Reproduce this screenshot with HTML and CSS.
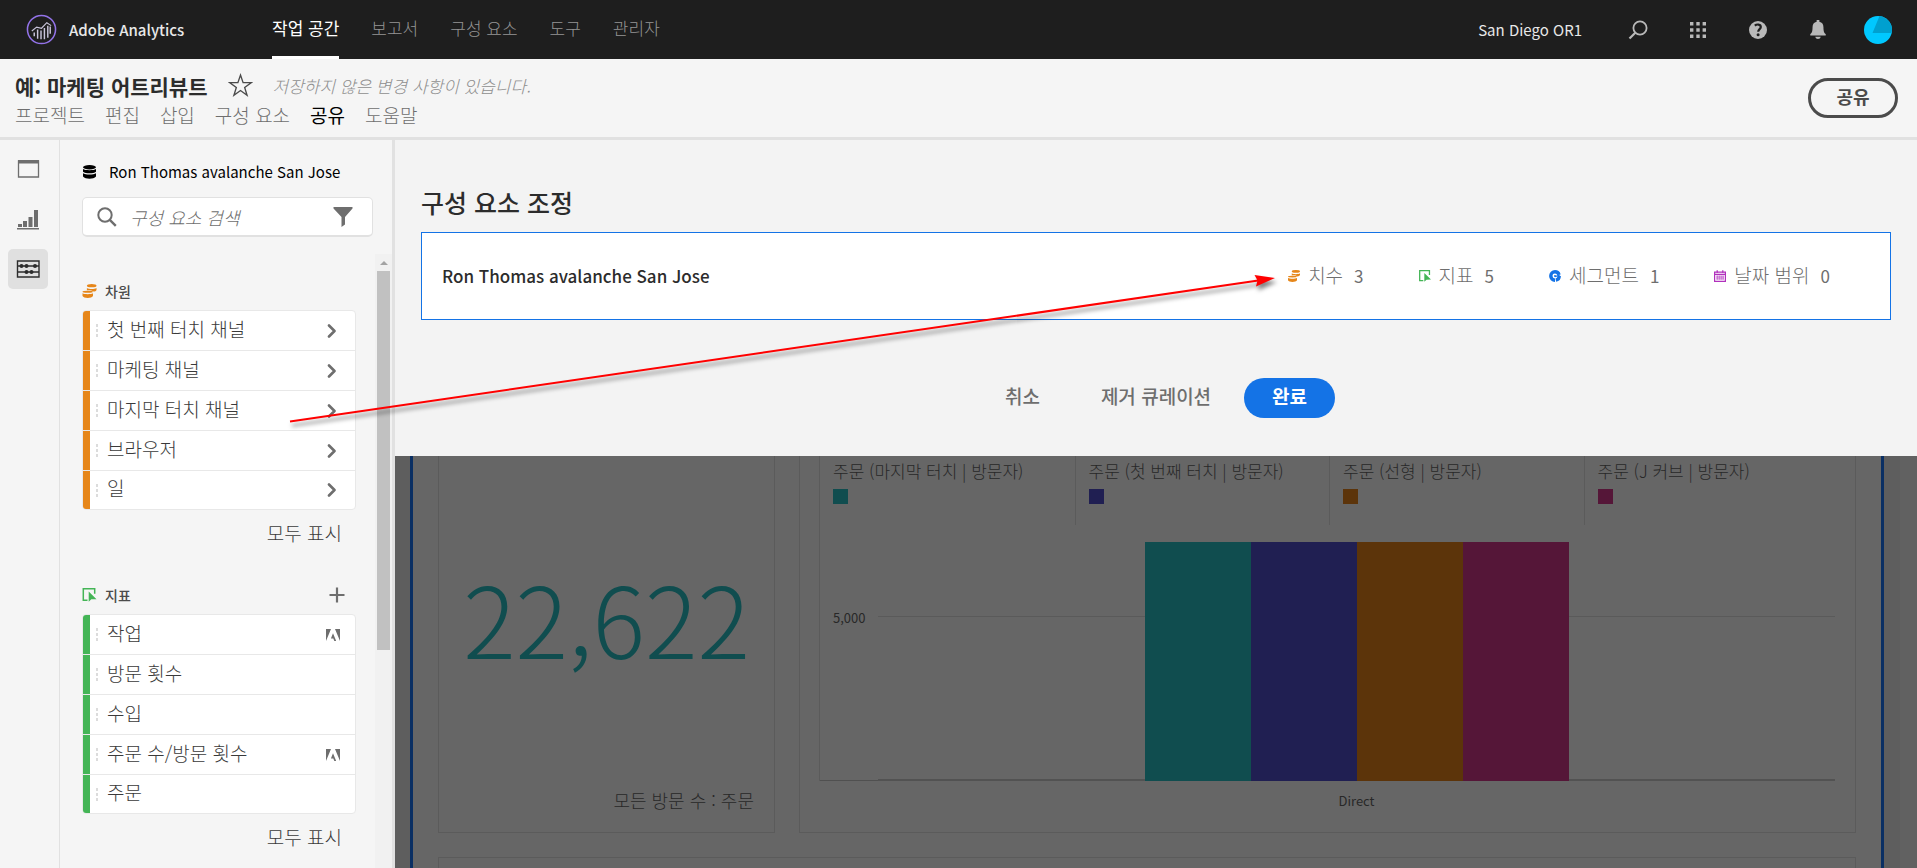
FILE: index.html
```html
<!DOCTYPE html>
<html lang="ko">
<head>
<meta charset="utf-8">
<title>Adobe Analytics</title>
<link rel="stylesheet" href="styles.css">
</head>
<body>
<svg class="sprite" aria-hidden="true">
  <symbol id="i-dimension" viewBox="0 0 14 14">
    <ellipse cx="9.2" cy="1.7" rx="4.800" ry="1.600"/>
    <path d="M4.400 3.900c1 .7 3 1 4.800 1s3.800-.3 4.800-1v2c-.5 1.100-1.600 1.500-3 1.700C10 6.500 7 6 4.400 6.200z"/>
    <ellipse cx="5.200" cy="7.700" rx="5.200" ry="1"/>
    <path d="M0 9.300c1 .6 3 .9 5.200.9s4.200-.3 5.300-.9V12c-.6 1.300-2.900 2-5.300 2S.6 13.300 0 12z"/>
  </symbol>
  <symbol id="i-metric" viewBox="0 0 14 14">
    <path d="M5 12.300H.8V.8h11.400v5" fill="none" stroke="currentColor" stroke-width="1.500"/>
    <path d="M6.200 3.500v10.200l2.600-2.400 5.200-.1z"/>
  </symbol>
  <symbol id="i-segment" viewBox="0 0 14 14">
    <circle cx="7" cy="7" r="4.900" fill="none" stroke="currentColor" stroke-width="4" stroke-dasharray="6.500 1 21 2.280"/>
    <path d="M7 7 13 5v1.300L7 8.500z"/>
    <circle cx="7" cy="7" r="1.200"/>
  </symbol>
  <symbol id="i-calendar" viewBox="0 0 14 14">
    <path d="M.7 2.500h12.600v10.800H.7zM.7 5h12.600" fill="none" stroke="currentColor" stroke-width="1.400"/>
    <path d="M3 .3h1.500v3H3zM9.500.3H11v3H9.500zM3 6.500h1.300v5H3zM5.300 6.500h1.300v5H5.300zM7.600 6.500h1.300v5H7.600zM9.900 6.500h1.300v5H9.900z"/>
  </symbol>
  <symbol id="i-chevron" viewBox="0 0 10 14">
    <path d="M2 1.500 7.500 7 2 12.500" fill="none" stroke="currentColor" stroke-width="2.600" stroke-linecap="round" stroke-linejoin="round"/>
  </symbol>
  <symbol id="i-adobe" viewBox="0 0 14 12">
    <path d="M0 0h5L0 12zM9 0h5v12zM7 4.200 10.200 12H8.300l-1-2.500H4.900z"/>
  </symbol>
</svg>
<div class="app">
  <header class="topbar">
    <a class="brand" href="#">
      <svg class="brand-logo" viewBox="0 0 32 32"><circle cx="16" cy="16" r="14.500" fill="none" stroke="#9373e8" stroke-width="1.600"/><g fill="none" stroke="#c9c4da" stroke-width="1.500"><path d="M8.500 19v4M12 16v9.500M15.500 17v9M19 14.500V26M22.500 12v12.500M25 13v7.500"/><path d="m6 17.500 5-4 5 1.200 5.500-5.700 4.500 3" stroke-width="1.200"/></g></svg>
      <span>Adobe Analytics</span>
    </a>
    <nav class="topnav">
      <a class="active" href="#">작업 공간</a>
      <a href="#">보고서</a>
      <a href="#">구성 요소</a>
      <a href="#">도구</a>
      <a href="#">관리자</a>
    </nav>
    <span class="org">San Diego OR1</span>
    <div class="top-actions">
      <button type="button" aria-label="검색"><svg viewBox="0 0 20 20"><circle cx="12" cy="8" r="6.600" fill="none" stroke="currentColor" stroke-width="1.800"/><path d="m7.300 12.700-5.800 5.800" stroke="currentColor" stroke-width="2.200"/></svg></button>
      <button type="button" aria-label="앱"><svg viewBox="0 0 20 20"><path d="M2 2h3.400v3.400H2zM8.300 2h3.400v3.400H8.300zM14.600 2H18v3.400h-3.400zM2 8.300h3.400v3.400H2zM8.300 8.300h3.400v3.400H8.300zM14.600 8.300H18v3.400h-3.400zM2 14.600h3.400V18H2zM8.300 14.600h3.400V18H8.300zM14.600 14.600H18V18h-3.400z"/></svg></button>
      <button type="button" aria-label="도움말"><svg viewBox="0 0 20 20"><circle cx="10" cy="10" r="9"/><path d="M6.800 5.600C8.700 4 12.800 4 12.800 7c0 2-2.600 2.300-2.600 4.700" fill="none" stroke="#1e1e1e" stroke-width="2.200"/><circle cx="10.100" cy="14.800" r="1.500" fill="#1e1e1e"/></svg></button>
      <button type="button" aria-label="알림"><svg viewBox="0 0 20 22"><path d="M8.500 0h3v2c3 .6 4.500 2.800 4.500 6 0 5 1 6.500 2.500 7.500V17h-17v-1.500C3 14.500 4 13 4 8c0-3.200 1.500-5.400 4.500-6zM7 18.500h6c-.4 1.600-1.600 2.500-3 2.500s-2.600-.9-3-2.500z"/></svg></button>
      <button class="avatar" type="button" aria-label="계정"><svg viewBox="0 0 28 28"><circle cx="14" cy="14" r="14" fill="#00c8ff"/><path d="M15.500.1 8.500 17H27.700A14 14 0 0 0 15.500.1z" fill="#00a0cf"/></svg></button>
    </div>
  </header>

  <section class="project-bar">
    <div class="project-info">
      <div class="title-row">
        <h1>예: 마케팅 어트리뷰트</h1>
        <button class="star" type="button" aria-label="즐겨찾기"><svg viewBox="0 0 24 24"><path d="m12 2 2.500 7.300h7.700L16 13.900l2.300 7.400-6.300-4.500-6.300 4.500L8 13.900 1.800 9.300h7.700z" fill="none" stroke="#4b4b4b" stroke-width="1.300"/></svg></button>
        <em>저장하지 않은 변경 사항이 있습니다.</em>
      </div>
      <nav class="menu">
        <a href="#">프로젝트</a>
        <a href="#">편집</a>
        <a href="#">삽입</a>
        <a href="#">구성 요소</a>
        <a class="active" href="#">공유</a>
        <a href="#">도움말</a>
      </nav>
    </div>
    <button class="share" type="button">공유</button>
  </section>

  <div class="body">
    <nav class="rail">
      <button type="button" aria-label="패널"><svg viewBox="0 0 24 24"><path d="M2.500 4h20v16h-20z" fill="none" stroke="currentColor" stroke-width="1.300"/><path d="M2 3h21v3.500H2z"/></svg></button>
      <button type="button" aria-label="시각화"><svg viewBox="0 0 24 24"><path d="M1 21h22v1.500H1zM2 17h4v3H2zM7 14h4v6H7zM12.500 10h4v10h-4zM18 3h4v17h-4z"/></svg></button>
      <button class="selected" type="button" aria-label="구성 요소"><svg viewBox="0 0 24 24"><path d="M1.500 4h21.500v16H1.500zM1.500 9h21.500M1.500 15h21.500" fill="none" stroke="currentColor" stroke-width="1.400"/><circle cx="5.500" cy="9" r="2"/><circle cx="10.500" cy="9" r="2"/><circle cx="19" cy="9" r="2"/><circle cx="10.500" cy="15" r="2"/><circle cx="15.500" cy="15" r="2"/></svg></button>
    </nav>

    <aside class="sidebar">
      <div class="suite">
        <svg viewBox="0 0 14 14"><ellipse cx="7" cy="2.300" rx="6.500" ry="2.200"/><path d="M.5 4c2.500 1.600 10.500 1.600 13 0v2.700c-2.500 2-10.500 2-13 0zM.5 8.300c2.500 1.700 10.500 1.700 13 0v3.200c-2.500 3-10.500 3-13 0z"/></svg>
        <span>Ron Thomas avalanche San Jose</span>
      </div>
      <div class="search">
        <svg viewBox="0 0 20 20"><circle cx="8" cy="8" r="6.700" fill="none" stroke="currentColor" stroke-width="2"/><path d="m12.800 12.800 6 6" stroke="currentColor" stroke-width="2.400"/></svg>
        <input type="text" placeholder="구성 요소 검색" aria-label="구성 요소 검색">
        <button type="button" aria-label="필터"><svg viewBox="0 0 20 20"><path d="M.5 0h19v1.500L12 10v7.500L8.500 20V10L.5 1.500z"/></svg></button>
      </div>
      <div class="scroll-area">
        <div class="components">
          <section class="group orange">
            <h2><svg><use href="#i-dimension"/></svg><span>차원</span></h2>
            <ul>
              <li><i class="grip"></i><span>첫 번째 터치 채널</span><svg class="chev"><use href="#i-chevron"/></svg></li>
              <li><i class="grip"></i><span>마케팅 채널</span><svg class="chev"><use href="#i-chevron"/></svg></li>
              <li><i class="grip"></i><span>마지막 터치 채널</span><svg class="chev"><use href="#i-chevron"/></svg></li>
              <li><i class="grip"></i><span>브라우저</span><svg class="chev"><use href="#i-chevron"/></svg></li>
              <li><i class="grip"></i><span>일</span><svg class="chev"><use href="#i-chevron"/></svg></li>
            </ul>
            <a class="show-all" href="#">모두 표시</a>
          </section>
          <section class="group green">
            <h2><svg><use href="#i-metric"/></svg><span>지표</span><button type="button" aria-label="지표 추가"><svg viewBox="0 0 16 16"><path d="M8 .5v15M.5 8h15" stroke="currentColor" stroke-width="2.200"/></svg></button></h2>
            <ul>
              <li><i class="grip"></i><span>작업</span><svg class="adobe"><use href="#i-adobe"/></svg></li>
              <li><i class="grip"></i><span>방문 횟수</span></li>
              <li><i class="grip"></i><span>수입</span></li>
              <li><i class="grip"></i><span>주문 수/방문 횟수</span><svg class="adobe"><use href="#i-adobe"/></svg></li>
              <li><i class="grip"></i><span>주문</span></li>
            </ul>
            <a class="show-all" href="#">모두 표시</a>
          </section>
        </div>
        <div class="scrollbar"><i class="arrow"></i><i class="thumb"></i></div>
      </div>
    </aside>

    <main class="workspace">
      <section class="curate">
        <h2>구성 요소 조정</h2>
        <div class="drop-card">
          <strong>Ron Thomas avalanche San Jose</strong>
          <ul class="counts">
            <li><svg class="c-orange"><use href="#i-dimension"/></svg><span>치수</span><b>3</b></li>
            <li><svg class="c-green"><use href="#i-metric"/></svg><span>지표</span><b>5</b></li>
            <li><svg class="c-blue"><use href="#i-segment"/></svg><span>세그먼트</span><b>1</b></li>
            <li><svg class="c-purple"><use href="#i-calendar"/></svg><span>날짜 범위</span><b>0</b></li>
          </ul>
        </div>
        <div class="actions">
          <button type="button">취소</button>
          <button type="button">제거 큐레이션</button>
          <button class="primary" type="button">완료</button>
        </div>
      </section>

      <div class="canvas">
        <div class="panel">
          <div class="viz-row">
            <article class="viz summary">
              <div class="big-number">22,622</div>
              <div class="caption">모든 방문 수 : 주문</div>
            </article>
            <article class="viz chart">
              <ul class="legend">
                <li><span>주문 (마지막 터치 | 방문자)</span><i class="teal"></i></li>
                <li><span>주문 (첫 번째 터치 | 방문자)</span><i class="indigo"></i></li>
                <li><span>주문 (선형 | 방문자)</span><i class="amber"></i></li>
                <li><span>주문 (J 커브 | 방문자)</span><i class="magenta"></i></li>
              </ul>
              <div class="plot-row">
                <div class="y-axis">5,000</div>
                <div class="plot">
                  <div class="gridline"></div>
                  <div class="bars"><i class="teal"></i><i class="indigo"></i><i class="amber"></i><i class="magenta"></i></div>
                </div>
              </div>
              <div class="x-axis">Direct</div>
            </article>
          </div>
          <div class="viz next"></div>
        </div>
        <div class="canvas-scroll"></div>
      </div>
    </main>
  </div>
</div>
<svg class="callout" width="1300" height="450" viewBox="0 0 1300 450" aria-hidden="true">
  <path d="M290 421.500 1260 280.300" fill="none" stroke="#f00" stroke-width="2"/>
  <path d="M1254.500 275 1275 278 1256 286.500 1257.500 280.500z" fill="#f00"/>
</svg>
</body>
</html>
```
FILE: styles.css
```css
* { box-sizing: border-box; }
body, h1, h2, ul { margin: 0; padding: 0; }
body {
  font-family: "Noto Sans CJK KR", "Noto Sans", sans-serif;
  font-size: 19px;
  line-height: 24px;
  color: #4b4b4b;
}
ul { list-style: none; }
a { color: inherit; text-decoration: none; }
button { font: inherit; color: inherit; background: none; border: 0; padding: 0; }
svg { display: block; fill: currentColor; flex: none; }
.sprite { position: absolute; width: 0; height: 0; }

.app { display: flex; flex-direction: column; height: 100vh; overflow: hidden; }

/* Top bar */
.topbar { display: flex; align-items: center; flex: none; height: 59px; padding: 0 25px 0 26px; background: #1e1e1e; color: #e8e8e8; }
.brand { display: flex; align-items: center; gap: 12px; width: 246px; font-size: 15px; font-weight: 500; }
.brand-logo { width: 31px; height: 31px; }
.topnav { display: flex; gap: 32px; align-self: stretch; flex: 1; font-size: 17px; font-weight: 300; color: #959595; }
.topnav a { display: flex; align-items: center; border-bottom: 3px solid transparent; }
.topnav .active { color: #fff; font-weight: 400; border-color: #fff; }
.org { margin-right: 42px; font-size: 15px; }
.top-actions { display: flex; align-items: center; gap: 32px; color: #b9b9b9; }
.top-actions button { display: grid; place-items: center; width: 28px; height: 28px; }
.top-actions button svg { width: 20px; height: 20px; }
.top-actions .avatar svg { width: 28px; height: 28px; }

/* Project bar */
.project-bar { display: flex; justify-content: space-between; align-items: center; flex: none; height: 81px; padding: 0 19px 0 15px; background: #f5f5f5; border-bottom: 3px solid #e1e1e1; }
.project-info { padding-top: 5px; }
.title-row { display: flex; align-items: center; height: 34px; }
.title-row h1 { font-size: 21px; font-weight: 700; color: #2c2c2c; }
.star { margin: 0 20px; }
.star svg { width: 25px; height: 25px; }
.title-row em { font-size: 17px; font-weight: 300; color: #8e8e8e; }
.menu { display: flex; gap: 20px; height: 30px; font-weight: 300; color: #6e6e6e; }
.menu .active { color: #000; font-weight: 400; }
.share { width: 90px; height: 40px; border: 3px solid #4b4b4b; border-radius: 20px; font-size: 18px; font-weight: 700; line-height: 30px; padding-bottom: 4px; }

.body { display: flex; flex: 1; min-height: 0; background: #f5f5f5; }

/* Icon rail */
.rail { display: flex; flex-direction: column; align-items: center; gap: 10px; width: 60px; padding: 9px 4px 0 0; border-right: 1px solid #e1e1e1; color: #6e6e6e; }
.rail button { display: grid; place-items: center; width: 40px; height: 40px; border-radius: 5px; }
.rail .selected { background: #e0e0e0; color: #2c2c2c; }
.rail svg { width: 24px; height: 24px; }

/* Component sidebar */
.sidebar { display: flex; flex-direction: column; width: 335px; flex: none; padding-left: 22px; border-right: 3px solid #e1e1e1; }
.suite { display: flex; align-items: center; gap: 12px; height: 57px; padding-top: 6px; font-size: 15px; color: #000; }
.suite svg { width: 15px; height: 14px; }
.search { display: flex; align-items: center; height: 40px; margin-right: 19px; padding: 0 19px 0 14px; background: #fff; border: 1px solid #e1e1e1; border-bottom-width: 2px; border-radius: 5px; color: #6e6e6e; }
.search svg { width: 20px; height: 20px; }
.search input { flex: 1; min-width: 0; margin: 0 13px; padding: 0; border: 0; background: none; font: inherit; font-size: 18px; font-weight: 300; font-style: italic; color: #4b4b4b; }
.search input::placeholder { color: #6e6e6e; opacity: 1; }
.scroll-area { display: flex; flex: 1; min-height: 0; margin-top: 17px; overflow: hidden; }
.components { flex: 1; padding: 20px 19px 0 0; }
.scrollbar { display: flex; flex-direction: column; align-items: center; gap: 6px; width: 17px; padding-top: 7px; background: #f1f1f1; }
.scrollbar .arrow { border: 4px solid transparent; border-top: 0; border-bottom-color: #a3a3a3; }
.scrollbar .thumb { width: 13px; height: 379px; background: #c1c1c1; }
.group h2 { display: flex; align-items: center; gap: 8px; height: 36px; padding-bottom: 3px; font-size: 14px; font-weight: 500; }
.group h2 > svg { width: 15px; height: 14px; }
.group h2 button { margin-left: auto; padding-right: 11px; color: #6e6e6e; }
.group h2 button svg { width: 16px; height: 16px; }
.orange h2 > svg, .c-orange { color: #e68619; }
.green h2 > svg, .c-green { color: #44b556; }
.c-blue { color: #1473e6; }
.c-purple { color: #b130bd; }
.group ul { border: 1px solid #e8e8e8; border-radius: 4px; background: #fff; overflow: hidden; }
.group li { display: flex; align-items: center; height: 40px; padding-right: 15px; border-bottom: 1px solid #e8e8e8; font-weight: 300; }
.group li::before { content: ""; width: 7px; align-self: stretch; background: currentColor; }
.group li:last-child { height: 38px; border-bottom: 0; }
.orange li { color: #e68619; }
.green li { color: #44b556; }
.group li span { flex: 1; margin-left: 9px; padding-bottom: 4px; color: #3a3a3a; }
.grip { width: 2px; height: 13px; margin-left: 6px; background: repeating-linear-gradient(#dcdcdc 0 3px, transparent 3px 5px); }
.group .chev { width: 10px; height: 14px; margin-right: 3px; color: #6e6e6e; }
.group .adobe { width: 14px; height: 12px; color: #6e6e6e; }
.show-all { display: flex; justify-content: flex-end; align-items: center; height: 48px; padding: 0 14px 2px 0; font-weight: 300; color: #3a3a3a; }
.green { margin-top: 20px; }

/* Curation drawer */
.workspace { display: flex; flex-direction: column; flex: 1; min-width: 0; }
.curate { padding: 44px 26px 38px; background: #f3f3f3; }
.curate h2 { height: 48px; line-height: 36px; font-size: 25px; font-weight: 500; color: #2c2c2c; }
.drop-card { display: flex; align-items: center; justify-content: space-between; height: 88px; padding: 0 60px 0 20px; background: #fff; border: 1px solid #1473e6; }
.drop-card strong { font-size: 17px; font-weight: 500; color: #2c2c2c; }
.counts { display: flex; gap: 55px; color: #6e6e6e; }
.counts li { display: flex; align-items: center; font-weight: 300; }
.counts svg { width: 12px; height: 12px; }
.counts span { margin: 0 11px 0 8px; padding-bottom: 2px; }
.counts b { font-size: 17px; font-weight: 400; }
.actions { display: flex; justify-content: center; gap: 5px; margin-top: 58px; }
.actions button { height: 40px; padding: 0 28px 5px; border-radius: 20px; font-weight: 500; color: #6e6e6e; }
.actions .primary { background: #1473e6; color: #fff; font-weight: 700; }

/* Dimmed project canvas */
.canvas { display: flex; flex: 1; min-height: 0; overflow: hidden; background: #5e5e5e; padding-left: 15px; color: #282828; }
.panel { display: flex; flex-direction: column; gap: 24px; flex: 1; padding: 0 25px; background: #666; border: solid #0a2f63; border-width: 0 3px; }
.canvas-scroll { width: 17px; margin-left: 16px; background: #616161; }
.viz-row { display: flex; gap: 24px; }
.viz { border: 1px solid #5b5b5b; }
.viz-row .viz { height: 377px; border-top: 0; }
.next { flex: 1; border-bottom: 0; }
.summary { display: flex; flex-direction: column; width: 337px; padding: 0 20px 20px; }
.big-number { flex: 1; padding-top: 105px; text-align: center; font-size: 98px; font-weight: 300; line-height: 110px; color: #104d4f; }
.caption { text-align: right; font-size: 18px; font-weight: 300; }
.chart { flex: 1; padding: 0 17px 0 19px; }
.legend { display: grid; grid-template-columns: repeat(4, 1fr); height: 69px; border-left: 1px solid #5b5b5b; font-size: 17px; }
.legend li { padding: 3px 0 0 13px; font-weight: 300; }
.legend li + li { border-left: 1px solid #5b5b5b; }
.legend i { display: block; width: 15px; height: 15px; margin-top: 6px; }
.teal { background: #104d4f; }
.indigo { background: #201f52; }
.amber { background: #5c340a; }
.magenta { background: #551638; }
.plot-row { display: flex; height: 256px; padding-right: 3px; border-left: 1px solid #5b5b5b; }
.y-axis { width: 58px; padding: 81px 0 0 13px; border-bottom: 1px solid #505050; font-size: 13px; }
.plot { display: grid; flex: 1; border-bottom: 2px solid #525252; }
.gridline { grid-area: 1 / 1; height: 1px; margin-top: 91px; background: #5a5a5a; }
.bars { grid-area: 1 / 1; display: flex; justify-content: center; margin: 17px 0 -2px; }
.bars i { width: 106px; }
.x-axis { padding: 8px 3px 0 59px; text-align: center; font-size: 13px; }

/* Arrow annotation over the page */
.callout { position: absolute; left: 0; top: 0; pointer-events: none; filter: drop-shadow(2px 4px 2px rgba(0, 0, 0, .5)); }
```
